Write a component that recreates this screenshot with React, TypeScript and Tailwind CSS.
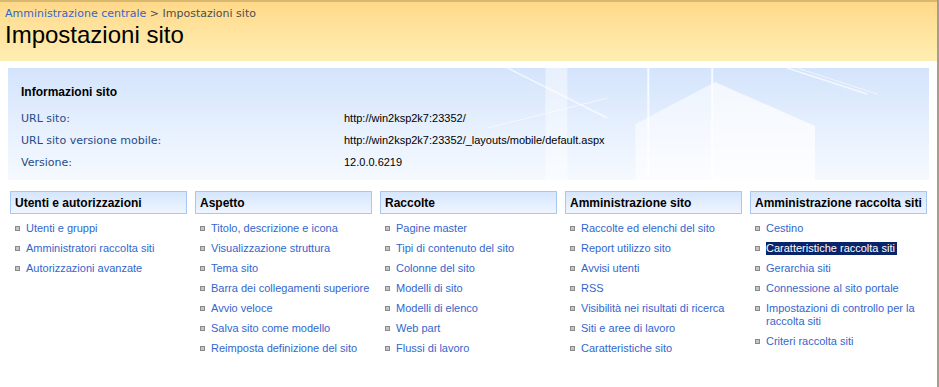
const columns: { title: string; items: string[] }[] = [
  {
    title: "Utenti e autorizzazioni",
    items: ["Utenti e gruppi", "Amministratori raccolta siti", "Autorizzazioni avanzate"],
  },
  {
    title: "Aspetto",
    items: [
      "Titolo, descrizione e icona",
      "Visualizzazione struttura",
      "Tema sito",
      "Barra dei collegamenti superiore",
      "Avvio veloce",
      "Salva sito come modello",
      "Reimposta definizione del sito",
    ],
  },
  {
    title: "Raccolte",
    items: [
      "Pagine master",
      "Tipi di contenuto del sito",
      "Colonne del sito",
      "Modelli di sito",
      "Modelli di elenco",
      "Web part",
      "Flussi di lavoro",
    ],
  },
  {
    title: "Amministrazione sito",
    items: [
      "Raccolte ed elenchi del sito",
      "Report utilizzo sito",
      "Avvisi utenti",
      "RSS",
      "Visibilità nei risultati di ricerca",
      "Siti e aree di lavoro",
      "Caratteristiche sito",
    ],
  },
  {
    title: "Amministrazione raccolta siti",
    items: [
      "Cestino",
      "Caratteristiche raccolta siti",
      "Gerarchia siti",
      "Connessione al sito portale",
      "Impostazioni di controllo per la raccolta siti",
      "Criteri raccolta siti",
    ],
  },
];

const info = [
  ["URL sito:", "http://win2ksp2k7:23352/"],
  ["URL sito versione mobile:", "http://win2ksp2k7:23352/_layouts/mobile/default.aspx"],
  ["Versione:", "12.0.0.6219"],
];

function Building() {
  return (
    <svg className="absolute inset-0 h-full w-full" viewBox="0 0 922 112" preserveAspectRatio="none">
      <rect x="538" y="0" width="22" height="112" fill="#ffffff" opacity="0.45" />
      <rect x="640" y="0" width="2" height="112" fill="#ffffff" opacity="0.8" />
      <rect x="704" y="0" width="2" height="112" fill="#ffffff" opacity="0.8" />
      <polygon points="628,56 708,14 808,58 808,112 628,112" fill="#ffffff" opacity="0.55" />
      <polygon points="706,14 808,58 808,112 706,112" fill="#ffffff" opacity="0.35" />
      <line x1="500" y1="0" x2="600" y2="50" stroke="#ffffff" strokeWidth="1.5" opacity="0.7" />
      <line x1="780" y1="0" x2="860" y2="26" stroke="#ffffff" strokeWidth="1.5" opacity="0.7" />
      <line x1="790" y1="0" x2="870" y2="26" stroke="#ffffff" strokeWidth="1" opacity="0.6" />
      <line x1="480" y1="60" x2="600" y2="30" stroke="#ffffff" strokeWidth="1" opacity="0.6" />
    </svg>
  );
}

export default function App() {
  return (
    <div className="h-[387px] w-[939px] overflow-hidden bg-white font-['Liberation_Sans',Arial,sans-serif]">
      <div className="flex h-full border-r-2 border-[#a59d8e]">
        <div className="flex-1">
          {/* Title area */}
          <div className="h-[61px] border-t-2 border-[#d8b76e] bg-gradient-to-b from-[#ffd98a] to-[#ffeeb3] px-[5px]">
            <div className="pt-[6px] font-['DejaVu_Sans',Verdana,sans-serif] text-[11px] leading-[12px] text-[#4d4d4d]">
              <span className="text-[#3366cc]">Amministrazione centrale</span> &gt; Impostazioni sito
            </div>
            <h1 className="mt-[2px] text-[24px] leading-[26px] text-black">Impostazioni sito</h1>
          </div>

          {/* Site info */}
          <div className="relative mx-[8px] mt-[7px] h-[112px] overflow-hidden bg-gradient-to-b from-[#d4e4fc] to-[#f6faff]">
            <Building />
            <div className="relative px-[13px] pt-[17px]">
              <div className="text-[12px] font-bold leading-[14px] text-black">Informazioni sito</div>
              <div className="mt-[13px] flex flex-col gap-[9px]">
                {info.map(([k, v]) => (
                  <div key={k} className="flex leading-[13px]">
                    <div className="w-[323px] font-['DejaVu_Sans',Verdana,sans-serif] text-[11px] text-[#1f4c8a]">{k}</div>
                    <div className="text-[11px] text-black">{v}</div>
                  </div>
                ))}
              </div>
            </div>
          </div>

          {/* Columns */}
          <div className="mt-[11px] grid grid-cols-[repeat(5,177px)] gap-[8px] pl-[10px]">
            {columns.map((col) => (
              <div key={col.title}>
                <div className="flex h-[23px] items-center border border-[#a7c8f2] bg-gradient-to-b from-[#d6e6fc] to-[#eef5ff] px-[4px] text-[12px] font-bold text-black">
                  {col.title}
                </div>
                <ul className="mt-[8px] flex flex-col gap-[7px]">
                  {col.items.map((item) => (
                    <li key={item} className="flex items-start text-[11px] leading-[13px]">
                      <span className="mt-[4px] ml-[5px] mr-[6px] h-[5px] w-[5px] shrink-0 border border-[#8a8a8a] bg-[#c4c4c4]" />
                      {item === "Caratteristiche raccolta siti" ? (
                        <span className="bg-[#0a246a] pr-[2px] text-white">{item}</span>
                      ) : (
                        <span className="text-[#3366cc]">{item}</span>
                      )}
                    </li>
                  ))}
                </ul>
              </div>
            ))}
          </div>
        </div>
      </div>
    </div>
  );
}
